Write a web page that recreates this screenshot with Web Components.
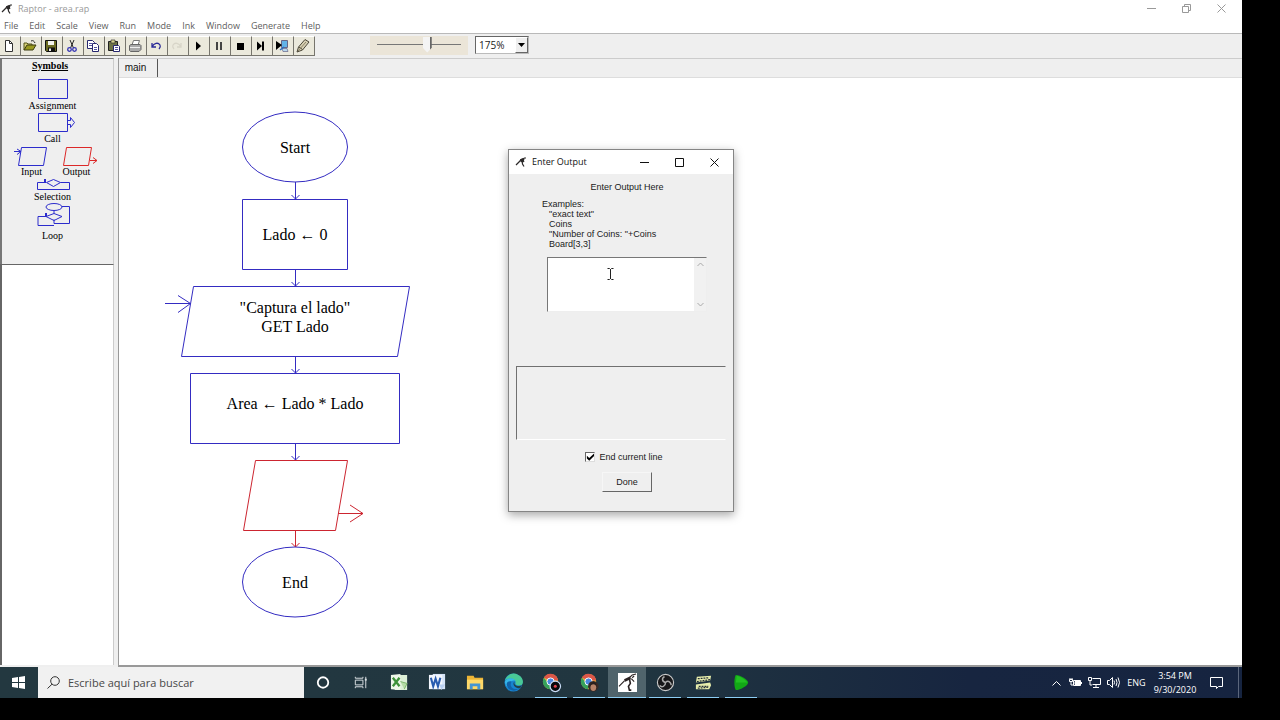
<!DOCTYPE html>
<html lang="es">
<head>
<meta charset="utf-8">
<title>Raptor - area.rap</title>
<style>
  html, body { margin: 0; background: #000; }
  body { font-family: "Open Sans", "Noto Sans", sans-serif; font-size: 9px; color: #222; }
</style>
</head>
<body>
<raptor-desktop></raptor-desktop>
<script>
const BASE = `<style>
  *, *::before, *::after { box-sizing: border-box; }
  button, input, select, textarea { font: inherit; color: inherit; margin: 0; border-radius: 0; outline: none; }
  button { padding: 0; border: 0; background: none; }
  svg { display: block; overflow: visible; }
</style>`;

/* Registers an element; markup is a string, or a function of the element's attributes */
function define(name, markup) {
  customElements.define(name, class extends HTMLElement {
    constructor() {
      super();
      this.attachShadow({ mode: "open" });
    }
    connectedCallback() {
      this.shadowRoot.innerHTML = BASE + (typeof markup === "function" ? markup(this) : markup);
    }
  });
}

define("raptor-mark", `<style>:host { display: block; width: 10px; height: 10px; } svg { width: 100%; height: 100%; }</style>
  <svg viewBox="0 0 20 20">
  <path d="M0 16L7 9M6 10l4-5 4-1 3-2h3M13 5l3 5M12 6l1 8 3 5" fill="none" stroke="#2b2828" stroke-width="2.4"/><path d="M8 5l6-3 3 3-3 6-5-1z" fill="#2b2828"/></svg>`);

/* ---------- window chrome ---------- */
define("window-bar", el => `<style>
    :host { display: flex; align-items: center; flex: none; background: #fff; }
    .name { flex: 1; margin-left: 6px; line-height: 12px; white-space: nowrap; }
    button { width: 35px; height: 14px; display: grid; place-items: center; }
    svg { fill: none; stroke: currentColor; }
  </style>
  <raptor-mark></raptor-mark><span class="name"><slot></slot></span>
  <button aria-label="Minimize"><svg width="9" height="9"><path d="M0 4.5H9"/></svg></button>
  <button aria-label="Maximize"><svg width="9" height="9"><path d="${el.hasAttribute("maximized") ? "M.5 2.5h6v6h-6zM2.5 2.5v-2h6v6h-2" : "M.5 .5h8v8h-8z"}"/></svg></button>
  <button aria-label="Close"><svg width="9" height="9"><path d="M.5 .5l8 8M8.5 .5l-8 8"/></svg></button>`);

define("menu-bar", `<style>
    :host { display: flex; gap: 11px; flex: none; height: 16px; padding-left: 4px; background: #fff; color: #606060; }
    button { line-height: 17px; height: 16px; }
  </style>
  ${["File","Edit","Scale","View","Run","Mode","Ink","Window","Generate","Help"].map(t => `<button>${t}</button>`).join("")}`);

/* ---------- tool bar ---------- */
const TOOLS = [
  ["New", `<path d="M3.5 1.500h4l3 3v8h-7z" fill="#fff" stroke="#333"/><path d="M7.500 1.500v3h3" fill="none" stroke="#333"/>`],
  ["Open", `<path d="M1 11V4h3l1 1h4v2" fill="#d8d27a" stroke="#55551a"/><path d="M1 11l3-5h9l-3 5z" fill="#9a9a20" stroke="#3c3c10"/><path d="M8 2c2-1 3 0 4 2" fill="none" stroke="#222"/>`],
  ["Save", `<path d="M1.500 1.500h11v11h-10l-1-1z" fill="#6c6c22" stroke="#111"/><path d="M4 2h6v4H4z" fill="#f4f4ee"/><path d="M4 8.500h7V12H4z" fill="#111"/><path d="M5 9.500h2V12H5z" fill="#eee"/>`],
  ["Cut", `<path d="M5 1l3.500 8M9 1L5.500 9" stroke="#222" fill="none"/><g fill="none" stroke="#3434b4" stroke-width="1.300"><circle cx="4.500" cy="10.500" r="1.800"/><circle cx="9.500" cy="10.500" r="1.800"/></g>`],
  ["Copy", `<g fill="#fff" stroke="#27276f"><path d="M1.500 1.500h5l2 2v6h-7z"/><path d="M6.500 4.500h4l2 2v6h-6z"/></g><path d="M3 4.500h3M3 6.500h3M8 8.500h3M8 10.500h3" stroke="#5555a0"/>`],
  ["Paste", `<path d="M1.500 2.500h9v9h-9z" fill="#6d7246" stroke="#222"/><path d="M4 1h4v3H4z" fill="#d9d490" stroke="#333" stroke-width=".7"/><path d="M6.500 6.500h5l1 1v5h-6z" fill="#fff" stroke="#27276f"/><path d="M8 8.500h3M8 10.500h3" stroke="#5555a0"/>`],
  ["Print", `<path d="M4 6l1.500-4.500h6L10 6" fill="#fff" stroke="#777"/><path d="M1.500 6.500l1.500-1h9l1 1v4l-2 2H2.500l-1-1z" fill="#aaa" stroke="#666"/><path d="M2 8.500h10" stroke="#eee"/>`],
  ["Undo", `<path d="M3 4v4h4M3 8c2-4 6-5 8-2 1 2 0 3-1 4" fill="none" stroke="#2b2b98" stroke-width="1.300"/>`],
  ["Redo", `<path d="M11 4v4H7M11 8C9 4 5 3 3 6c-1 2 0 3 1 4" fill="none" stroke="#d8d5c8" stroke-width="1.300"/>`],
  ["Run", `<path d="M5 2.500l5 4.500-5 4.500z" fill="#000"/>`],
  ["Pause", `<path d="M4 3h2v8H4zM8 3h2v8H8z" fill="#444"/>`],
  ["Stop", `<path d="M4 4h7v7H4z" fill="#000"/>`],
  ["Step", `<path d="M3 2.500l5 4.500-5 4.500z" fill="#000"/><path d="M9 2.500v9" stroke="#000" stroke-width="2"/>`],
  ["Step to next call", `<path d="M6.500 1.500h6v7h-6z" fill="#63b3e8" stroke="#668"/><path d="M7 9.500h5l1 3H8z" fill="#b9d8ee" stroke="#668" stroke-width=".7"/><path d="M1 2l6 4-6 5z" fill="#000"/><path d="M5 11l4-3" stroke="#2b6cc0" stroke-width="1.500"/>`],
  ["Ink", `<path d="M1 13l1.500-5L9 .5l4 2.500-6.500 8z" fill="#d7d0b4" stroke="#4a4638"/><path d="M3 8l3.500 2.500" stroke="#4a4638"/><path d="M2 12l8-9" stroke="#8b8266"/>`]
];
define("tool-bar", `<style>
    :host { display: flex; flex: none; height: 25px; padding-top: 2px; align-items: flex-start; background: #efefef; border-top: 1px solid #b9b9b9; }
    .tools { display: flex; margin-right: 55px; }
    .tools button { width: 21px; height: 20px; display: grid; place-items: center; padding-right: 2px; background: #ebe9dc; border: solid; border-width: 1px 1px 1px 0; border-color: #fff #77756d #77756d #fff; }
    .tools svg { width: 14px; height: 14px; }
    .speed { width: 98px; height: 19px; padding: 0 7px; background: #ebe5d8; display: flex; margin-right: 7px; }
    input { appearance: none; width: 100%; height: 17px; background: linear-gradient(#777, #777) center 8px / 100% 1px no-repeat; }
    input::-webkit-slider-thumb { appearance: none; width: 9px; height: 16px; background: linear-gradient(90deg, #f4f4f4 7px, #666 7px); clip-path: polygon(0 0, 100% 0, 100% 70%, 50% 100%, 0 70%); }
    .zoom { position: relative; width: 54px; height: 18px; font: 10px/14px "Open Sans", sans-serif; }
    select { appearance: none; width: 100%; height: 100%; padding: 0 0 0 3px; background: #fff; border: 1px solid; border-color: #666 #bbb #bbb #666; }
    .drop { position: absolute; right: 1px; top: 1px; bottom: 1px; width: 13px; display: grid; place-items: center; background: #efefef; border: 1px solid; border-color: #fff #666 #666 #fff; pointer-events: none; }
  </style>
  <div class="tools">${TOOLS.map(([n, p]) => `<button aria-label="${n}"><svg viewBox="0 0 14 14">${p}</svg></button>`).join("")}</div>
  <div class="speed"><input type="range" min="0" max="100" value="61" aria-label="Speed"></div>
  <div class="zoom"><select aria-label="Zoom"><option>175%</option></select><span class="drop"><svg width="7" height="4"><path d="M0 0h7L3.500 4z"/></svg></span></div>`);

/* ---------- symbols panel ---------- */
define("flow-symbol", el => `<style>
    :host { display: flex; flex-direction: column; align-items: center; color: #2c2ccc; }
    svg { width: 60px; fill: none; stroke: currentColor; }
    span { font: 10px/12px "Liberation Serif", serif; color: #000; }
  </style>
  <svg height="${el.getAttribute("h") || 21}">${({
    assignment: `<path d="M15.500 .5h29v19h-29z"/>`,
    call: `<path d="M15.500 1.500h29v18h-29zM44.500 8.500h3v-3l4 5-4 5v-3h-3"/>`,
    input: `<path d="M19.500 2.500h25l-3 18h-25zM12 6.500h7M15 4l4 2.500-4 3"/>`,
    output: `<path d="M19.500 2.500h25l-3 18h-25zM43 15.500h7M46 12.500l4 3-4 3"/>`,
    selection: `<path d="M22.500 4.500h-8v7h32v-7h-9l-7-3-7 3 7 4 7-4"/><path d="M22 1v4" stroke-width="2"/>`,
    loop: `<ellipse cx="31" cy="4" rx="8" ry="3.500"/><path d="M31 7.500v3M39 3.500h7.500v17H31v-4M23 13.500h-8v9h16M23 13.500l8-3 8 3-8 4z"/><path d="M23 10v4" stroke-width="2"/>`
  })[el.getAttribute("kind")]}</svg><span><slot></slot></span>`);

define("symbol-panel", `<style>
    :host { display: flex; flex-direction: column; flex: none; width: 119px; background: #efefef; border-right: 1px solid #999; padding-right: 4px; }
    .symbols { height: 206px; flex: none; border: solid #777; border-width: 1px 1px 0 2px; border-right-color: #ccc; }
    h2 { margin: 0 15px 6px 0; font: bold 10px/14px "Liberation Serif", serif; text-align: center; text-decoration: underline; color: #000; }
    .list { padding-right: 10px; }
    .pair { display: flex; justify-content: center; margin-right: -3px; }
    .pair > * { width: 45px; }
    .output { color: #dc2828; }
    .watch { flex: 1; background: #fff; border: solid #666; border-width: 1px 1px 0 2px; border-right-color: #ccc; margin-bottom: 2px; }
  </style>
  <section class="symbols"><h2>Symbols</h2><div class="list">
    <flow-symbol kind="assignment">Assignment</flow-symbol>
    <flow-symbol kind="call">Call</flow-symbol>
    <div class="pair"><flow-symbol kind="input">Input</flow-symbol><flow-symbol class="output" kind="output">Output</flow-symbol></div>
    <flow-symbol kind="selection" h="13">Selection</flow-symbol>
    <flow-symbol kind="loop" h="27">Loop</flow-symbol>
  </div></section>
  <div class="watch"></div>`);

/* ---------- flowchart ---------- */
define("flow-node", el => {
  const kind = el.getAttribute("kind"), w = +el.getAttribute("w");
  const shape = {
    oval: `<ellipse cx="${w / 2}" cy="35" rx="${w / 2 - .5}" ry="35"/>`,
    box: `<path d="M.5 .5H${w - .5}V70.5H.5z"/>`,
    input: `<path d="M12.500 .5H${w - .5}L${w - 12.5} 70.5H.5zM-16 17.500H9.500M-3 9.500L9.500 17.500L-3 26.500"/>`,
    output: `<path d="M12.500 .5H${w - .5}L${w - 12.5} 70.5H.5zM95 53.500H120M107 45L120 53.500L107 62"/>`
  }[kind];
  return `<style>
    :host { display: block; }
    .shape { position: relative; width: ${w}px; height: 70px; margin: 0 auto; display: grid; place-items: center; }
    .shape svg { position: absolute; inset: 0; }
    svg { fill: none; stroke: var(--ink, #342cc2); }
    .text { position: relative; font: 16px/19px "Liberation Serif", serif; color: #000; text-align: center; padding-bottom: var(--lift, 0px); }
    .link { margin: 0 auto; }
  </style>
  <div class="shape"><svg width="${w}" height="70">${shape}</svg><div class="text"><slot></slot></div></div>
  ${el.hasAttribute("last") ? "" : `<svg class="link" width="9" height="17"><path d="M4.500 0v17M.5 13l4 4 4-4"/></svg>`}`;
});

define("flow-canvas", `<style>
    :host { display: flex; flex-direction: column; flex: 1; min-width: 0; position: relative; background: #fff; border-bottom: 2px solid #999; }
    nav { flex: none; height: 20px; background: #efefef; border-top: 1px solid #ccc; border-bottom: 1px solid #ddd; }
    nav button { width: 39px; height: 18px; padding-right: 5px; border-right: 1px solid #555; font: 10px/18px "Liberation Sans", sans-serif; color: #111; }
    .chart { width: 260px; margin: 34px 0 0 46px; }
    .raised { --lift: 9px; }
    .red { --ink: #cc2530; }
    output-dialog { position: absolute; left: 389px; top: 91px; }
  </style>
  <nav><button>main</button></nav>
  <div class="chart">
    <flow-node kind="oval" w="106">Start</flow-node>
    <flow-node kind="box" w="106">Lado ← 0</flow-node>
    <flow-node kind="input" w="229" class="raised">"Captura el lado"<br>GET Lado</flow-node>
    <flow-node kind="box" w="210" class="raised">Area ← Lado * Lado</flow-node>
    <flow-node kind="output" w="105" class="red"></flow-node>
    <flow-node kind="oval" w="106" last>End</flow-node>
  </div>
  <output-dialog></output-dialog>`);

/* ---------- dialog ---------- */
define("output-dialog", `<style>
    :host { display: flex; flex-direction: column; width: 226px; height: 363px; background: #efefef; border: 1px solid #858585; box-shadow: 0 3px 9px rgba(0,0,0,.35); font: 9px/10px "Liberation Sans", sans-serif; color: #1a1a1a; }
    window-bar { height: 24px; margin-bottom: 8px; padding: 0 1px 0 7px; font-family: "Open Sans", sans-serif; color: #111; }
    h1 { margin: 0 0 7px; padding-left: 12px; font: inherit; text-align: center; }
    .examples { padding-left: 33px; margin-bottom: 8px; }
    .examples ul { margin: 0; padding: 0 0 0 7px; list-style: none; }
    .entry { position: relative; width: 160px; height: 55px; margin: 0 0 54px 38px; }
    textarea { display: block; resize: none; overflow: hidden; width: 100%; height: 100%; background: #fff; border: 1px solid; border-color: #777 #eee #eee #777; }
    .scroll { position: absolute; right: 1px; top: 1px; bottom: 1px; width: 12px; padding: 4px 3px; display: flex; flex-direction: column; justify-content: space-between; background: #f1f1f1; }
    .scroll svg, .beam { fill: none; stroke: #aaa; }
    .beam { position: absolute; left: 60px; top: 11px; stroke: #222; }
    .result { height: 74px; margin: 0 7px 11px; border: 1px solid; border-color: #707070 #efefef #fff #707070; }
    label { display: flex; align-items: center; align-self: center; gap: 4px; margin: 0 0 9px 6px; line-height: 12px; }
    input { appearance: none; width: 10px; height: 10px; background: #fff; border: 1px solid; border-color: #666 #ddd #ddd #666; }
    input:checked::before { content: ""; display: block; width: 8px; height: 8px; background: #000; clip-path: polygon(5% 35%, 35% 62%, 95% 5%, 95% 38%, 35% 98%, 5% 68%); }
    button { align-self: center; width: 50px; height: 20px; margin-left: 12px; border: 1px solid; border-color: #f6f6f6 #666 #666 #f6f6f6; }
  </style>
  <window-bar>Enter Output</window-bar>
  <h1>Enter Output Here</h1>
  <div class="examples">Examples:<ul><li>"exact text"</li><li>Coins</li><li>"Number of Coins: "+Coins</li><li>Board[3,3]</li></ul></div>
  <div class="entry"><textarea aria-label="Enter Output Here"></textarea>
    <span class="scroll"><svg width="7" height="4"><path d="M.5 4l3-3 3 3"/></svg><svg width="7" height="4"><path d="M.5 0l3 3 3-3"/></svg></span>
    <svg class="beam" width="7" height="12"><path d="M.5 .5h2l1 1 1-1h2M.5 11.500h2l1-1 1 1h2M3.500 1v10"/></svg></div>
  <div class="result"></div>
  <label><input type="checkbox" checked>End current line</label>
  <button>Done</button>`);

/* ---------- task bar ---------- */
const CHROME = `<circle cx="9" cy="9" r="8" fill="#e4b53a"/><path d="M2 5a8 8 0 0 1 15 3H9z" fill="#dc5648"/><path d="M2 5a8 8 0 0 0 6 12l3-5-5-2z" fill="#36a15b"/><circle cx="9" cy="9" r="3.800" fill="#4b87df" stroke="#fff"/>`;
const APPS = [
  ["Cortana", `<circle cx="9.500" cy="10" r="5.500" fill="none" stroke="#fff" stroke-width="1.900"/>`],
  ["Task view", `<g fill="none" stroke="#dde3e6"><path d="M3.500 7.500h8v5h-8zM3.500 4v1.500h8V4M3.500 16v-1.500h8V16M14.500 4v12"/><path d="M14.500 6v2" stroke-width="2"/></g>`],
  ["Excel", `<path d="M6 2h12v16H5z" fill="#dcefd6"/><path d="M1 2l10-1v17l-10-1z" fill="#eef7e9"/><path d="M3 5l7 9M10 5l-7 9" stroke="#3d9239" stroke-width="2.400"/><path d="M11 9l7 2-3 6" fill="#b4dba5" stroke="#7bb56d"/>`],
  ["Word", `<path d="M5 1h13v16H5z" fill="#d5e4f8"/><path d="M1 2h14v15H1z" fill="#f2f6fd"/><path d="M3 5l2.500 9 2.500-8 2.500 8L13 5" fill="none" stroke="#285cb0" stroke-width="2.200"/><path d="M12 12h6l-4 6z" fill="#b8cff0"/>`],
  ["Explorer", `<path d="M1 3h7l1 2h9v12H1z" fill="#edb536"/><path d="M1 7h17v10H1z" fill="#ffd968"/><path d="M4 11h11v6h-3v-3H7v3H4z" fill="#4595d3"/>`],
  ["Edge", `<circle cx="10" cy="10" r="9.500" fill="#1783cf"/><path d="M1 8C3 1 10-1 15 2c5 2 6 8 4 10-2 2-7 1-7-1 1-2-1-5-4-5-4 0-5 0-7 2z" fill="#49c896"/><path d="M1 9c2-4 8-5 11-1-5-1-8 4-3 9-5 0-8-4-8-8z" fill="#36b6e8"/><path d="M8 9c-3 5 2 10 8 7-5 5-12 2-13-3-1-3 2-5 5-4z" fill="#1262a9"/><path d="M11 9c-1 4 3 6 8 4l-2 3c-5 1-9-4-6-7z" fill="#22404a"/>`],
  ["Chrome recorder", CHROME + `<circle cx="14" cy="14" r="5.500" fill="#08080a" stroke="#c9ddf7" stroke-width="1.300"/><circle cx="14" cy="14" r="1.600" fill="#e2434d"/>`, "open"],
  ["Chrome profile", CHROME + `<circle cx="14" cy="14" r="5.500" fill="#382a25"/><ellipse cx="14" cy="15" rx="3" ry="4" fill="#b78369"/><path d="M10.500 14c0-6 7-6 7 0-2-3-5-3-7 0z" fill="#29201e"/>`, "open"],
  ["Raptor", `<path d="M0 0h20v20H0z" fill="#fff"/><g fill="none" stroke="#2b2323"><path d="M1 14L7 8M12 5l3-3 4-1" stroke-width="1.200"/><path d="M7 8l6-3" stroke-width="3"/><path d="M12 6l1 5-2 3 1 4h2" stroke-width="1.700"/><path d="M14 6l3 3M15 5l2-2" stroke-width="1.200"/></g>`, "open active"],
  ["OBS", `<circle cx="10" cy="10" r="8.500" fill="#171719" stroke="#c9c9c9" stroke-width="1.200"/><g fill="none" stroke="#a9a9a9" stroke-width="1.600"><path d="M10 10c-4-1-4-5-1-6M10 10c3-3 6 0 6 3M10 10c0 4-4 6-6 3"/></g>`, "open"],
  ["Film strip", `<path d="M3 4l15-1-1 5-15 2zM2 12l15-2 1 3-2 4H2z" fill="#e7edac"/><path d="M4 6l12-1M3 9l14-2M5 14h10M4 16l11-1" stroke="#263038" stroke-width="1.300" stroke-dasharray="2 1"/>`, "open"],
  ["Camtasia", `<path d="M4 2c5 0 13 5 13 8s-8 8-13 8c-2-3-2-13 0-16z" fill="#12a816"/><path d="M5 3c5 1 10 5 11 7H4z" fill="#22c022"/>`, "open"]
];
define("task-bar", `<style>
    :host { display: flex; flex: none; height: 31px; background: linear-gradient(90deg, #233840 0%, #213640 50%, #172540 78%, #162440 100%); color: #fff; }
    button { display: grid; place-items: center; flex: none; }
    .start { width: 38px; padding-right: 1px; }
    .search { display: flex; align-items: center; width: 266px; background: #f1f1f1; color: #444; padding: 0 9px; gap: 8px; flex: none; }
    .search svg { flex: none; }
    .search input { flex: 1; min-width: 0; border: 0; padding: 0; background: none; font-size: 11px; height: 20px; }
    .search input::placeholder { color: #484848; opacity: 1; }
    .apps { display: flex; flex: 1; }
    .apps button { width: 38px; position: relative; }
    .apps svg { width: 19px; height: 19px; }
    .open::after { content: ""; position: absolute; left: 3px; right: 3px; bottom: 0; height: 1px; background: #8ccdf4; }
    .active { background: #50646c; }
    .active::after { left: 0; right: 0; }
    .tray { display: flex; align-items: center; flex: none; }
    .tray button { width: 19px; height: 100%; }
    .tray .lang { width: 27px; }
    .tray .clock { width: 50px; line-height: 14px; text-align: center; }
    .tray .notes { width: 32px; }
    .tray svg { fill: none; stroke: #fff; }
    .peek { width: 4px; height: 100%; border-left: 1px solid #5b667c; margin-left: 6px; }
  </style>
  <button class="start" aria-label="Start"><svg width="13" height="13" fill="#fff"><path d="M0 2l6-1v5H0zM7 1l6-1v6H7zM0 7h6v5l-6-1zM7 7h6v6l-6-1z"/></svg></button>
  <label class="search"><svg width="13" height="13" fill="none" stroke="#333"><circle cx="8" cy="5" r="4.300"/><path d="M5 8.200L.5 12.500"/></svg><input type="text" placeholder="Escribe aquí para buscar" aria-label="Buscar"></label>
  <div class="apps">${APPS.map(([n, p, c = ""]) => `<button class="${c}" aria-label="${n}"><svg viewBox="0 0 20 20">${p}</svg></button>`).join("")}</div>
  <div class="tray">
    <button aria-label="Hidden icons"><svg width="9" height="6"><path d="M.5 5.500l4-4 4 4"/></svg></button>
    <button aria-label="Battery"><svg width="13" height="9"><path d="M4.500 2.500h7v5h-7zM12.500 4v2"/><path d="M6 3.500h5v3H6z" fill="#fff"/><path d="M.5 1.500h3v2h-3zM2 4v3h2M1 0v2M3 0v2"/></svg></button>
    <button aria-label="Network"><svg width="13" height="11"><path d="M4.500 1.500h8v6h-8M8 7.500v3M5 10.500h6M.5 .5h3v3h-3zM2 4v4h2"/></svg></button>
    <button aria-label="Volume"><svg width="13" height="11"><path d="M.5 3.500h2l3-3v10l-3-3h-2zM7 3.500q1 2 0 4M9 2q2 3.500 0 7M11 .5q3 5 0 10"/></svg></button>
    <button class="lang">ENG</button>
    <button class="clock">3:54 PM<br>9/30/2020</button>
    <button class="notes" aria-label="Notifications"><svg width="13" height="12"><path d="M.5 .5h12v9h-4l-2 2v-2h-6z"/></svg></button>
    <span class="peek"></span>
  </div>`);

/* ---------- desktop ---------- */
define("raptor-desktop", `<style>
    :host { display: flex; flex-direction: column; min-height: 100vh; padding: 0 38px 22px 0; box-sizing: border-box; background: #000; }
    window-bar { height: 17px; padding: 0 3px 0 2px; color: #999; }
    main { display: flex; flex: 1; }
  </style>
  <window-bar maximized>Raptor - area.rap</window-bar>
  <menu-bar></menu-bar>
  <tool-bar></tool-bar>
  <main><symbol-panel></symbol-panel><flow-canvas></flow-canvas></main>
  <task-bar></task-bar>`);
</script>
</body>
</html>
